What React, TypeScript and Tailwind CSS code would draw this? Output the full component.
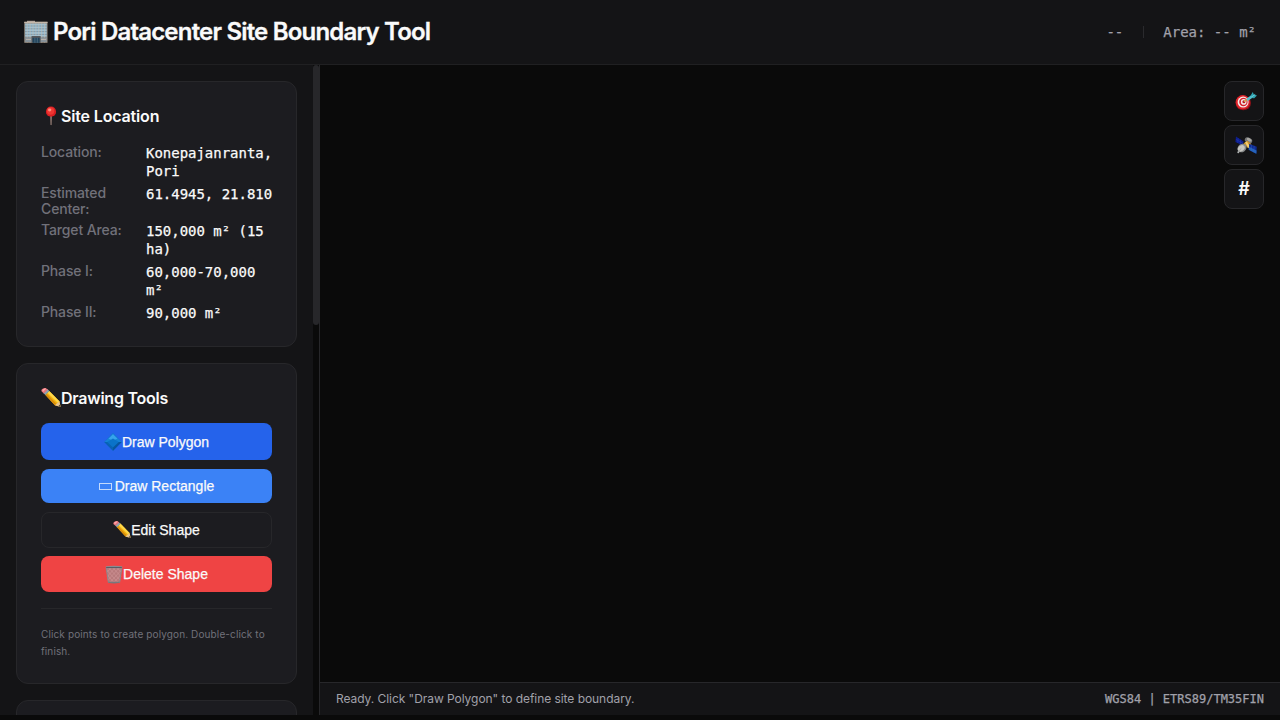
import React from "react";

const INTER = "font-[Inter,'Liberation_Sans',sans-serif]";
const MONO =
  "font-['DejaVu_Sans_Mono','Liberation_Mono',monospace] [-webkit-text-stroke:0.25px_currentColor]";
const ARIAL =
  "font-['Liberation_Sans',Arial,sans-serif] [-webkit-text-stroke:0.25px_currentColor]";

function BuildingIcon() {
  const cols = [0, 1, 2, 3, 4, 5, 6];
  const rows = [0, 1, 2, 3, 4];
  return (
    <svg className="h-6 w-6 shrink-0" viewBox="0 0 24 24">
      <path d="M3 .8h8v2H3z" fill="#b9aca0" />
      <path d="M.3 1.8h23.2v21H.3z" fill="#9c9287" />
      <path d="M.3 1.8h23.2v1.2H.3z" fill="#c4b8aa" />
      <path d="M1.2 3.6h21.4v13.2H1.2z" fill="#9dc0d3" />
      {rows.map((r) => (
        <path key={r} d={`M1 ${6 + r * 2.8}h22`} stroke="#6d7f8c" strokeWidth=".6" />
      ))}
      {cols.map((c) => (
        <path key={c} d={`M${3.2 + c * 2.9} 3.4v19`} stroke="#c7bfb4" strokeWidth=".6" />
      ))}
      <path d="M1.2 17.6h6.6v4.4H1.2zM16.2 17.6h6.4v4.4h-6.4z" fill="#87929a" />
      <path d="M2 19.4h5M17 19.4h5" stroke="#cabfb0" strokeWidth=".8" />
      <path d="M7.6 16h9v6.8h-9z" fill="#55585c" />
      <path d="M8.6 17.8h7v5h-7z" fill="#20445c" />
      <path d="M10.9 17.8v5M13.3 17.8v5" stroke="#768994" strokeWidth=".5" />
    </svg>
  );
}

function PinIcon() {
  return (
    <svg className="h-5 w-5 shrink-0" viewBox="0 0 20 20">
      <path d="M9.2 9h1.7l-.3 9.2-.5 1-.6-1z" fill="#9b8178" />
      <circle cx="10" cy="5.7" r="5.1" fill="#d91e22" />
      <circle cx="9.6" cy="5" r="3.7" fill="#ef3632" />
      <ellipse cx="8.7" cy="4" rx="1.7" ry="1.4" fill="#ff8c7d" />
    </svg>
  );
}

function PencilIcon({ className }: { className: string }) {
  return (
    <svg className={className} viewBox="0 0 20 20">
      <path d="M4.2 6.8 8.2 2.9 18.4 13.2 19.6 18.9 13.9 17.2z" fill="#f5b711" />
      <path d="M6.6 4.7 8.2 2.9 18.4 13.2l-1.7 1.5z" fill="#ffd84a" />
      <path d="M4.2 6.8l1.4-1.3 9.9 10.2-1.6 1.5z" fill="#d98d0b" />
      <path d="M18.4 13.2 19.6 18.9 13.9 17.2z" fill="#e8c48e" />
      <path d="M19 16.5l.6 2.4-2.5-.7z" fill="#4b4038" />
      <path d="M2.4 4.9 6.3 1.1 8.4 3.1 4.4 7z" fill="#8ea3ad" />
      <path d="M.7 3.5C0 2.5.5 1.5 1.6.8 3-.1 4.5-.2 5.3.4L6.8 1.6 2.8 5.4z" fill="#e8747c" />
      <path d="M1.3 2.2C2 .8 3.9.2 5 .7L2 3.7z" fill="#ffabaa" />
    </svg>
  );
}

function DiamondIcon() {
  return (
    <svg className="h-[18px] w-[18px] shrink-0" viewBox="0 0 18 18">
      <path d="M9 .3 17.7 9 9 17.7.3 9z" fill="#0a6cc4" />
      <path d="M9 .3 17.7 9H.3z" fill="#1582d6" />
      <path d="M9 1.3 13.4 5.8 9 7.6 4.5 5.8z" fill="#37a3ec" />
      <path d="M.3 9 9 17.7V9z" fill="#0862b4" />
      <path d="M9 9h8.7L9 17.7z" fill="#07559f" />
      <path d="M3.2 8.9 9 5.5l5.8 3.4L9 14.5z" fill="#0a73c9" />
    </svg>
  );
}

function TrashIcon() {
  return (
    <svg className="h-[19px] w-[18px] shrink-0" viewBox="0 0 18 19">
      <path d="M1 1.6h16L14.8 18H3.2z" fill="#b87a7c" />
      <path
        d="M1.8 5 13 17.5M2.4 10l6.6 7.5M3 2l12 13M7 2l9 9.5M11.2 2 16 7M16.3 5 5 17.5M15.5 10 9 17.5M15 2 3 15M11 2 2.3 11.5M6.8 2 2 7"
        stroke="#d09597"
        strokeWidth=".6"
      />
      <path d="M1.2 2.8 3.4 17.6M16.8 2.8l-2.2 14.8" stroke="#8c898d" />
      <path d="M.6 1.6Q9 .1 17.4 1.6L17 3.2H1z" fill="#898b90" />
      <path d="M1.2 2.5h15.6" stroke="#4d5259" strokeWidth=".8" />
      <path d="M3.2 16.7h11.6v1.1Q9 19 3.2 17.8z" fill="#77777d" />
    </svg>
  );
}

function TargetIcon() {
  return (
    <svg className="h-[22px] w-[22px] shrink-0" viewBox="0 0 22 22">
      <ellipse cx="8.3" cy="12" rx="7.7" ry="7.3" fill="#8e1118" />
      <circle cx="7.8" cy="11.2" r="7.1" fill="#df2229" />
      <circle cx="8.1" cy="11.1" r="5.5" fill="#f4ece9" />
      <circle cx="8.4" cy="11" r="4.2" fill="#d51f2b" />
      <circle cx="8.7" cy="10.9" r="2.8" fill="#f4ece9" />
      <circle cx="8.9" cy="10.8" r="1.5" fill="#b51724" />
      <path d="m9 10.6 3-2.1" stroke="#d4a548" strokeWidth="1.4" />
      <path d="m12 8.8 5-3.4" stroke="#54bdca" strokeWidth="2.8" />
      <path d="M15.6 4.4 17.8 1l1 2.6 3.2.8L19.2 7.2l-2.8-.1z" fill="#2fa3b1" />
      <path d="m16 6.3 4.2-2.8" stroke="#74d4dc" strokeWidth=".9" />
    </svg>
  );
}

function SatelliteIcon() {
  return (
    <svg className="h-[22px] w-[22px] shrink-0" viewBox="0 0 22 22">
      <path d="M1 1.6 8.6 6.4l-.8 4.2L.4 7z" fill="#0d1c8c" />
      <path d="M.9 4.4 8 8.4M3.2 3.2 2.7 8M5.8 4.8 5.2 9.3" stroke="#2a48b8" strokeWidth=".4" />
      <ellipse cx="13.5" cy="5.4" rx="3.9" ry="2.8" transform="rotate(28 13.5 5.4)" fill="#747577" />
      <ellipse cx="14.2" cy="4.7" rx="2.6" ry="1.5" transform="rotate(28 14.2 4.7)" fill="#aaa8a3" />
      <path d="m8.5 8.3 4.2-2.5 3.7 3.5-3.3 4z" fill="#cc922c" />
      <path d="m10.1 7.3 1.8-.9 2.8 5-1.4 1.8z" fill="#f2cf72" />
      <ellipse cx="7" cy="13" rx="4.9" ry="4" transform="rotate(-38 7 13)" fill="#87898a" />
      <ellipse cx="6.3" cy="13.3" rx="3.7" ry="2.8" transform="rotate(-38 6.3 13.3)" fill="#c6c5c0" />
      <path d="m6 13.5-2.6 3.6" stroke="#a8a8a6" />
      <circle cx="3.3" cy="17.3" r="1" fill="#aeb0b0" />
      <path d="m14.2 8.8 7.6 3-.5 7-7.6-4z" fill="#0f2a92" />
      <path d="m14 11.8 7.5 3.6-.2 3.4-7.6-4z" fill="#2463ba" />
      <path d="m16.6 9.8-.3 6.2m2.8-5.2-.3 6.5" stroke="#3a68c0" strokeWidth=".4" />
    </svg>
  );
}

const FACTS = [
  { label: ["Location:"], value: ["Konepajanranta,", "Pori"] },
  { label: ["Estimated", "Center:"], value: ["61.4945, 21.810"] },
  { label: ["Target Area:"], value: ["150,000 m²\u00a0(15", "ha)"] },
  { label: ["Phase I:"], value: ["60,000-70,000", "m²"] },
  { label: ["Phase II:"], value: ["90,000 m²"] },
];

function Lines({ lines }: { lines: string[] }) {
  return (
    <>
      {lines.map((line) => (
        <span key={line} className="block whitespace-nowrap">
          {line}
        </span>
      ))}
    </>
  );
}

export default function App() {
  return (
    <div className={`flex h-[720px] w-[1280px] flex-col overflow-hidden bg-[#0a0a0a] text-[#fafafa] ${INTER}`}>
      <header className="flex h-[65px] shrink-0 items-center justify-between border-b border-[#202022] bg-[#141416] px-6">
        <div className="flex items-center gap-[5px]">
          <BuildingIcon />
          <h1 className="whitespace-nowrap text-2xl font-semibold leading-8 tracking-[-0.81px] [-webkit-text-stroke:0.3px_currentColor]">
            Pori Datacenter Site Boundary Tool
          </h1>
        </div>
        <div className={`flex items-center text-sm text-[#a1a1aa] ${MONO}`}>
          <span>--</span>
          <span className="ml-5 mr-[19px] h-3 w-px bg-[#2a2a2d]" />
          <span>Area: -- m²</span>
        </div>
      </header>

      <div className="flex h-[650px] shrink-0">
        <aside className="flex w-80 shrink-0 overflow-hidden border-r border-[#27272a] bg-[#141416]">
          <div className="flex w-[313px] shrink-0 flex-col gap-4 px-4 pt-4">
            <section className="h-[266px] w-[281px] shrink-0 rounded-xl border border-[#27272a] bg-[#1c1c20] px-6 pt-6">
              <h2 className="flex h-5 items-center text-base font-semibold tracking-[-0.16px]">
                <PinIcon />
                <span>Site Location</span>
              </h2>
              <dl className="mt-[18px] flex flex-col gap-[5px]">
                {FACTS.map((f) => (
                  <div key={f.label[0]} className="flex">
                    <dt className="w-[105px] shrink-0 text-sm font-medium leading-4 tracking-[-0.14px] text-[#71717a]">
                      <Lines lines={f.label} />
                    </dt>
                    <dd className={`text-sm leading-[18px] tracking-[-0.02px] ${MONO}`}>
                      <Lines lines={f.value} />
                    </dd>
                  </div>
                ))}
              </dl>
            </section>

            <section className="h-[321px] w-[281px] shrink-0 rounded-xl border border-[#27272a] bg-[#1c1c20] px-6 pt-6">
              <h2 className="flex h-5 items-center text-base font-semibold tracking-[-0.24px]">
                <PencilIcon className="h-5 w-5 shrink-0" />
                <span>Drawing Tools</span>
              </h2>
              <div className={`mt-[15px] flex flex-col text-sm ${ARIAL}`}>
                <button className="flex h-[37px] items-center justify-center rounded-lg bg-[#2563eb]">
                  <DiamondIcon />
                  <span>Draw Polygon</span>
                </button>
                <button className="mt-[9px] flex h-[34px] items-center justify-center gap-1 rounded-lg bg-[#3b82f6]">
                  <span className="h-[7px] w-[13px] border border-[#c4dafc]" />
                  <span className="-ml-px">Draw Rectangle</span>
                </button>
                <button className="mt-[9px] flex h-9 items-center justify-center rounded-lg border border-[#27272a]">
                  <PencilIcon className="h-[18px] w-[18px] shrink-0" />
                  <span>Edit Shape</span>
                </button>
                <button className="mt-2 flex h-9 items-center justify-center rounded-lg bg-[#ef4444]">
                  <TrashIcon />
                  <span>Delete Shape</span>
                </button>
              </div>
              <p className="mt-4 border-t border-[#27272a] pt-[17px] text-[10px] leading-[17px] tracking-[0.12px] text-[#71717a]">
                <Lines lines={["Click points to create polygon. Double-click to", "finish."]} />
              </p>
            </section>

            <section className="h-20 w-[281px] shrink-0 rounded-xl border border-[#27272a] bg-[#1c1c20]" />
          </div>
          <div className="w-1.5 shrink-0 bg-[#0a0a0a]">
            <div className="h-[260px] rounded-[3px] bg-[#27272a]" />
          </div>
        </aside>

        <main className="flex min-w-0 flex-1 flex-col">
          <div className="flex flex-1 flex-col items-end gap-1 px-4 pt-[15.5px]">
            <button className="flex h-10 w-10 items-center justify-center rounded-lg border border-[#27272a] bg-[#141416] pl-1 pt-0.5">
              <TargetIcon />
            </button>
            <button className="flex h-10 w-10 items-center justify-center rounded-lg border border-[#27272a] bg-[#141416] pl-1 pt-0.5">
              <SatelliteIcon />
            </button>
            <button className={`flex h-10 w-10 items-center justify-center rounded-lg border border-[#27272a] bg-[#141416] text-lg font-semibold ${INTER}`}>
              #
            </button>
          </div>
          <footer className="flex h-[33px] shrink-0 items-center justify-between border-t border-[#27272a] bg-[#141416] px-4 text-xs text-[#a1a1aa]">
            <span className="tracking-[-0.05px]">Ready. Click "Draw Polygon" to define site boundary.</span>
            <span className={MONO}>WGS84 | ETRS89/TM35FIN</span>
          </footer>
        </main>
      </div>
    </div>
  );
}
